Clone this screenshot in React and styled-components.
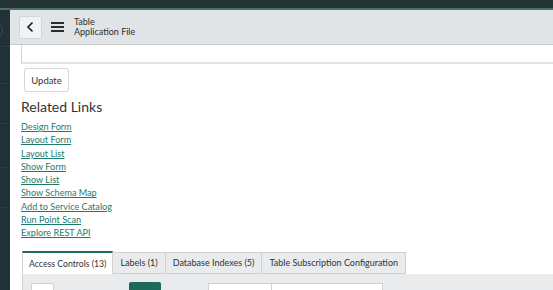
import React from "react";
import styled, { createGlobalStyle } from "styled-components";

const GlobalStyle = createGlobalStyle`
  html, body { margin: 0; padding: 0; background: #ffffff; overflow: hidden; }
  body { font-family: "Lato", "Open Sans", sans-serif; }
  * { box-sizing: border-box; }
`;

const Page = styled.div`
  width: 553px;
  height: 290px;
  display: flex;
  flex-direction: column;
  overflow: hidden;
`;

const TopBand = styled.div`
  height: 10px;
  flex: none;
  background: #243538;
  border-bottom: 2px solid #4d6e60;
`;

const Body = styled.div`
  flex: 1;
  display: flex;
  min-height: 0;
`;

const Sidebar = styled.div`
  width: 10px;
  flex: none;
  background: #213236;
  display: flex;
  flex-direction: column;
  position: relative;
  overflow: hidden;
`;

const SideRow = styled.div`
  height: ${(p) => p.h}px;
  flex: none;
  border-bottom: 1px solid #2c3d41;
`;

const SideCircle = styled.div`
  position: absolute;
  left: -14px;
  top: 12px;
  width: 17px;
  height: 17px;
  border-radius: 50%;
  border: 1px solid #3d4f53;
`;

const Main = styled.div`
  flex: 1;
  display: flex;
  flex-direction: column;
  min-width: 0;
`;

const Header = styled.div`
  height: 35px;
  flex: none;
  background: #e1e4e7;
  border-bottom: 1px solid #c8cbce;
  display: flex;
  align-items: center;
  padding-left: 9px;
`;

const BackButton = styled.div`
  width: 23px;
  height: 23px;
  border: 1px solid #d3d6d9;
  border-radius: 2px;
  background: #f1f2f3;
  display: flex;
  align-items: center;
  justify-content: center;
`;

const Burger = styled.div`
  margin-left: 9px;
  width: 13px;
  display: flex;
  flex-direction: column;
  gap: 2px;
  span {
    height: 2px;
    background: #2b2b2b;
    display: block;
  }
`;

const Titles = styled.div`
  margin-left: 10px;
  display: flex;
  flex-direction: column;
  font-size: 9px;
  line-height: 10px;
  color: #2e2e2e;
`;

const Content = styled.div`
  flex: 1;
  padding-left: 11px;
  display: flex;
  flex-direction: column;
  min-height: 0;
  & > * { flex: none; }
`;

const FieldBox = styled.div`
  height: 19px;
  border-left: 1px solid #cfd2d5;
  border-bottom: 2px solid #e2e4e6;
  margin-right: -20px;
`;

const UpdateButton = styled.div`
  margin-top: 4px;
  margin-left: 3px;
  width: 45px;
  height: 24px;
  border: 1px solid #d4d6d9;
  border-radius: 3px;
  background: #fff;
  display: flex;
  align-items: center;
  justify-content: center;
  font-size: 9.5px;
  color: #333;
`;

const Heading = styled.div`
  margin-top: 7px;
  font-size: 14px;
  line-height: 16px;
  color: #333;
`;

const Links = styled.div`
  margin-top: 5px;
  display: flex;
  flex-direction: column;
  align-items: flex-start;
`;

const LinkItem = styled.a`
  font-size: 9.1px;
  line-height: 13.3px;
  color: #1d7b6c;
  text-decoration: underline;
  text-underline-offset: 1px;
`;

const TabBar = styled.div`
  margin-top: 11px;
  margin-left: 1px;
  display: flex;
  align-items: flex-end;
  height: 23px;
`;

const Tab = styled.div`
  height: ${(p) => (p.active ? 23 : 22)}px;
  padding: 0 ${(p) => (p.active ? 6 : 7)}px;
  display: flex;
  align-items: center;
  font-size: ${(p) => (p.active ? 8.7 : 9)}px;
  color: #333;
  background: ${(p) => (p.active ? "#ffffff" : "#e9ebed")};
  border: 1px solid #cfd2d5;
  border-left: ${(p) => (p.first ? "1px solid #cfd2d5" : "none")};
  border-top: ${(p) => (p.active ? "2px solid #1d6a5b" : "1px solid #cfd2d5")};
  border-bottom: ${(p) => (p.active ? "none" : "1px solid #cfd2d5")};
  white-space: nowrap;
`;

const Panel = styled.div`
  margin-left: 1px;
  flex: 1 !important;
  background: #e9ebed;
  border-left: 1px solid #cfd2d5;
  padding: 9px 0 0 8px;
  display: flex;
  align-items: flex-start;
  margin-right: -20px;
`;

const SmallBtn = styled.div`
  width: 23px;
  height: 20px;
  background: #fff;
  border: 1px solid #cfd2d5;
  border-radius: 2px;
`;

const GreenBtn = styled.div`
  margin-left: 75px;
  margin-top: -1px;
  width: 32px;
  height: 20px;
  background: #1d6a5b;
  border-radius: 2px;
`;

const SearchGroup = styled.div`
  margin-left: 47px;
  display: flex;
`;

const SelectBox = styled.div`
  width: 64px;
  height: 20px;
  background: #fff;
  border: 1px solid #cfd2d5;
`;

const InputBox = styled.div`
  width: 111px;
  height: 20px;
  background: #fff;
  border: 1px solid #cfd2d5;
  border-left: none;
`;

const links = [
  "Design Form",
  "Layout Form",
  "Layout List",
  "Show Form",
  "Show List",
  "Show Schema Map",
  "Add to Service Catalog",
  "Run Point Scan",
  "Explore REST API",
];

const tabs = [
  "Access Controls (13)",
  "Labels (1)",
  "Database Indexes (5)",
  "Table Subscription Configuration",
];

export default function App() {
  return (
    <Page>
      <GlobalStyle />
      <TopBand />
      <Body>
        <Sidebar>
          <SideCircle />
          <SideRow h={37} />
          <SideRow h={37} />
          <SideRow h={40} />
          <SideRow h={44} />
          <SideRow h={40} />
        </Sidebar>
        <Main>
          <Header>
            <BackButton>
              <svg width="9" height="12" viewBox="0 0 9 12">
                <path d="M6.5 1.5 L2 6 L6.5 10.5" fill="none" stroke="#222" strokeWidth="1.7" />
              </svg>
            </BackButton>
            <Burger>
              <span />
              <span />
              <span />
            </Burger>
            <Titles>
              <span>Table</span>
              <span>Application File</span>
            </Titles>
          </Header>
          <Content>
            <FieldBox />
            <UpdateButton>Update</UpdateButton>
            <Heading>Related Links</Heading>
            <Links>
              {links.map((l) => (
                <LinkItem key={l}>{l}</LinkItem>
              ))}
            </Links>
            <TabBar>
              {tabs.map((t, i) => (
                <Tab key={t} active={i === 0} first={i === 0}>
                  {t}
                </Tab>
              ))}
            </TabBar>
            <Panel>
              <SmallBtn />
              <GreenBtn />
              <SearchGroup>
                <SelectBox />
                <InputBox />
              </SearchGroup>
            </Panel>
          </Content>
        </Main>
      </Body>
    </Page>
  );
}
